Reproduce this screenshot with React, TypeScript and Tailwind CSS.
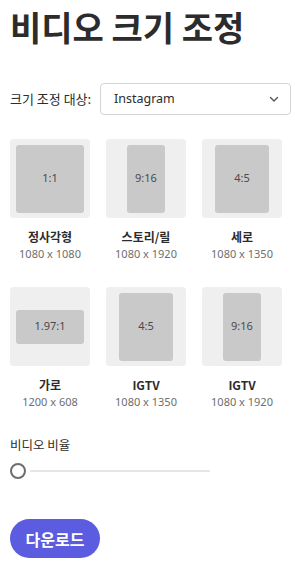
import React, { useState } from "react";

type Preset = {
  name: string;
  size: string;
  ratio: string;
  w: number;
  h: number;
};

const PRESETS: Preset[] = [
  { name: "정사각형", size: "1080 x 1080", ratio: "1:1", w: 68, h: 68 },
  { name: "스토리/릴", size: "1080 x 1920", ratio: "9:16", w: 38, h: 68 },
  { name: "세로", size: "1080 x 1350", ratio: "4:5", w: 54, h: 68 },
  { name: "가로", size: "1200 x 608", ratio: "1.97:1", w: 68, h: 34 },
  { name: "IGTV", size: "1080 x 1350", ratio: "4:5", w: 54, h: 68 },
  { name: "IGTV", size: "1080 x 1920", ratio: "9:16", w: 38, h: 68 },
];

const FONT = "font-['Noto_Sans','Noto_Sans_CJK_KR',sans-serif]";

export default function App() {
  const [value, setValue] = useState(0);

  return (
    <div className={`${FONT} w-[295px] min-h-[567px] bg-white px-[10px] text-[#2c2c2c]`}>
      <h1 className="pt-[5px] text-[34px] font-bold leading-[44px] whitespace-nowrap font-['Noto_Sans_CJK_KR',sans-serif]">
        비디오 크기 조정
      </h1>

      <div className="mt-[34px] flex items-center gap-[7px] whitespace-nowrap">
        <span className="w-[83px] shrink-0 text-[13px] text-[#2c2c2c] font-['Noto_Sans_CJK_KR',sans-serif]">
          크기 조정 대상:
        </span>
        <button className="flex h-[32px] w-[191px] shrink-0 items-center justify-between rounded-[4px] border border-[#d5d5d5] bg-white pl-[13px] pr-[10px] text-[12.5px] text-[#2c2c2c]">
          <span>Instagram</span>
          <svg width="12" height="12" viewBox="0 0 12 12" fill="none">
            <path d="M2.5 4.5 6 8l3.5-3.5" stroke="#555" strokeWidth="1.4" strokeLinecap="round" strokeLinejoin="round" />
          </svg>
        </button>
      </div>

      <div className="mt-[24px] grid grid-cols-[80px_80px_80px] gap-x-[16px] gap-y-[26px]">
        {PRESETS.map((p, i) => (
          <div key={i} className="flex flex-col items-center">
            <div className="flex h-[79px] w-[80px] items-center justify-center rounded-[4px] bg-[#efefef]">
              <div
                className="flex items-center justify-center rounded-[3px] bg-[#c9c9c9] text-[11px] text-[#4a4a4a]"
                style={{ width: p.w, height: p.h }}
              >
                {p.ratio}
              </div>
            </div>
            <div className="mt-[10px] text-[12px] font-bold leading-[17px] text-[#2c2c2c] font-['Noto_Sans_CJK_KR',sans-serif]">
              {p.name}
            </div>
            <div className="mt-[1px] text-[11px] leading-[15px] text-[#6e6e6e]">{p.size}</div>
          </div>
        ))}
      </div>

      <div className="mt-[27px] text-[12.5px] leading-[17px] text-[#2c2c2c] font-['Noto_Sans_CJK_KR',sans-serif]">
        비디오 비율
      </div>
      <div className="mt-[10px] flex h-[16px] w-[200px] items-center">
        <div className="relative h-[16px] w-[16px] shrink-0">
          <input
            type="range"
            min={0}
            max={100}
            value={value}
            onChange={(e) => setValue(Number(e.target.value))}
            className="absolute inset-0 opacity-0"
          />
          <div className="h-[16px] w-[16px] rounded-full border-2 border-[#6e6e6e] bg-white" />
        </div>
        <div className="ml-[4px] h-[2px] flex-1 rounded-full bg-[#e6e6e6]" />
      </div>

      <button className="mt-[40px] h-[39px] w-[90px] rounded-full bg-[#5c5ce0] text-[16px] font-bold text-white font-['Noto_Sans_CJK_KR',sans-serif]">
        다운로드
      </button>
    </div>
  );
}
